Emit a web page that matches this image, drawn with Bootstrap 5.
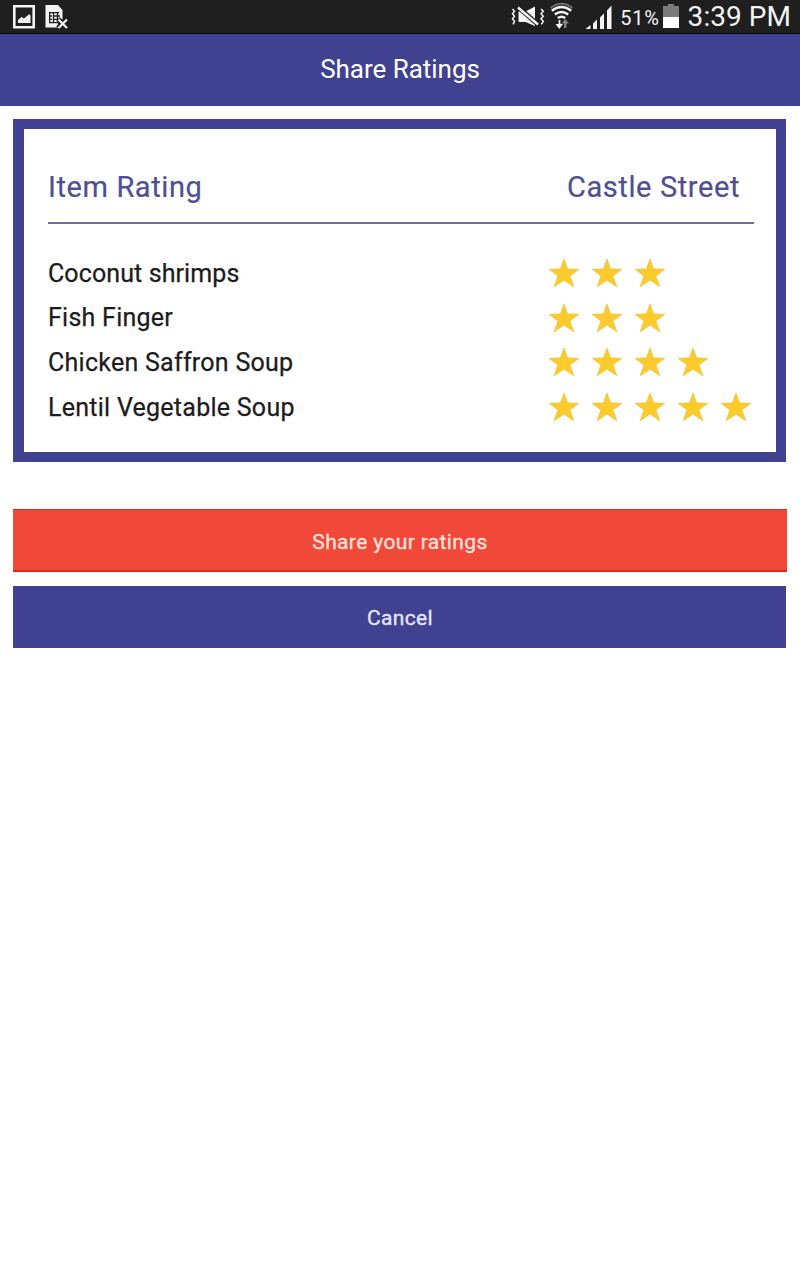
<!DOCTYPE html>
<html lang="en">
<head>
<meta charset="utf-8">
<meta name="viewport" content="width=device-width, initial-scale=1">
<title>Share Ratings</title>
<link href="https://cdn.jsdelivr.net/npm/bootstrap@5.3.0/dist/css/bootstrap.min.css" rel="stylesheet">
<style>
  :root { --indigo: #404291; }
  body { font-family: Roboto, "Liberation Sans", sans-serif; background: #fff; color: #1c1c1e; }
  svg { display: block; flex: none; }
  .status-bar { height: 34px; background: #1f1f1f; border-bottom: 1px solid #050505; color: #f4f4f4; padding: 0 9px 0 12px; }
  .battery-level { font-size: 20px; line-height: 34px; letter-spacing: .75px; padding-top: 1px; }
  .clock { font-size: 28px; line-height: 34px; letter-spacing: .05px; }
  .title-bar { height: 72px; background: var(--indigo); color: #fff; padding-bottom: 2px; }
  .title-bar h1 { font-size: 26px; font-weight: 400; line-height: 30px; letter-spacing: -.03px; }
  .content { padding: 13px 13px 0; }
  .ratings { height: 343px; border: 10px solid var(--indigo); border-left-width: 11px; padding: 0 22px 0 24px; margin-right: 1px; }
  .ratings-head { height: 95px; padding: 42px 14px 0 0; border-bottom: 2px solid #716e9c; color: #4e4f94; font-size: 29px; line-height: 32px; letter-spacing: .6px; -webkit-text-stroke: .2px; }
  .ratings-body { padding-top: 27px; }
  .rating-row { height: 44.7px; font-size: 25px; letter-spacing: .26px; -webkit-text-stroke: .25px; }
  .rating-row:first-child { letter-spacing: .1px; }
  .stars { width: 206px; gap: 11px; margin-top: -1px; }
  .action { height: 63px; border-radius: 0; font-size: 21px; font-weight: 400; padding: 6px 0 0; letter-spacing: .37px; -webkit-text-stroke: .3px; }
  .action-share { background: #f04939; color: #fde3dc; border: 0; border-top: 1px solid #c23429; border-bottom: 2px solid #d9281b; margin-top: 47px; }
  .action-cancel { background: var(--indigo); color: #e8e8f8; border: 0; height: 62px; margin-top: 14px; width: calc(100% - 1px); padding: 3px 0 0 1px; }
</style>
</head>
<body>
<svg width="0" height="0" class="position-absolute" aria-hidden="true">
  <symbol id="star" viewBox="0 0 32 30"><path fill="#fbcb2c" stroke="#e5c545" stroke-width=".6" d="M16 .8 19.600 10.800 31 11.300 22 18 26 29 16 22.200 6 29 9.800 18 1 11.300 12.400 10.800Z"/></symbol>
</svg>

<header class="status-bar d-flex align-items-start justify-content-between">
  <div class="d-flex">
    <svg width="60" height="33" viewBox="12 0 60 33">
      <path fill="none" stroke="#f4f4f4" stroke-width="2.6" d="M14.3 6.3H33.7V27.2H14.3Z"/>
      <path fill="#f4f4f4" d="M18 23V20L21.500 17 24 18.500 29.500 14 30.500 16V23Z"/>
      <path fill="#f4f4f4" d="M45.500 5H58L62.500 10V19L58 23V27.500H45.500Z"/>
      <path fill="none" stroke="#1f1f1f" stroke-width="1.300" d="M49 12.700H59M49 22.700H58M49.700 12.500V23M49 16H52M49 19.300H52M53.500 12.500V23M57.500 12.500V20M53.500 16H60M53.500 19.300H58"/>
      <path stroke="#1f1f1f" stroke-width="5" d="m58 19 9 9m0-9-9 9"/>
      <path stroke="#f4f4f4" stroke-width="2.200" d="m58.500 19.500 8.500 8.500m0-8.500-8.500 8.500"/>
    </svg>
  </div>
  <div class="d-flex align-items-start">
    <svg width="108" height="33" viewBox="508.500 0 108 33">
      <g fill="none" stroke="#f4f4f4" stroke-width="1.500">
        <path d="m513 9 2 2.300-2 2.500 2 2.500-2 2.500 2 2.500-1.500 3M541.500 9l2.300 2.300-2.300 2.500 2.300 2.500-2.300 2.500 2.300 2.500-2 3"/>
      </g>
      <path fill="#f4f4f4" d="M519 11.500H526L535.500 6.500V26L526 22H519Z"/>
      <path stroke="#1f1f1f" stroke-width="4.800" d="m518.500 7 20 17.500"/>
      <path stroke="#f4f4f4" stroke-width="2.400" d="m518.500 7.500 20 17"/>
      <g fill="none" stroke-width="2.400">
        <path stroke="#6c6c6c" stroke-width="1.800" d="M551 8Q562 -.5 573 8"/>
        <path stroke="#f4f4f4" d="M552.300 10.800Q562 3.300 571.700 10.800M555.300 14.500Q562 9.300 568.700 14.500M558.300 18Q562 15.300 565.700 18"/>
        <path stroke="#f4f4f4" stroke-width="1.800" d="M560 20V26"/><path stroke="#858585" d="M565.700 28V21"/>
      </g>
      <path fill="#f4f4f4" d="M556 24H563.500L559.800 29Z"/><path fill="#858585" d="M562 23.500 565.700 19 569.500 23.500Z"/>
      <path fill="#f4f4f4" d="M586 29 591 25V29ZM593.500 23.500 597.500 19.500V29H593.500ZM600.500 17.500 604.500 13.500V29H600.500ZM607.500 10.500 612 5.500V29H607.500Z"/>
    </svg>
    <span class="battery-level ms-1">51%</span>
    <svg width="24" height="33" viewBox="660 0 24 33"><path fill="#7b7b7b" d="M663 6H668V4H674V6H679V17H663Z"/><path fill="#fff" d="M663 17H679V28H663Z"/></svg>
    <span class="clock ms-1">3:39 PM</span>
  </div>
</header>

<div class="title-bar d-flex align-items-center justify-content-center"><h1 class="m-0">Share Ratings</h1></div>

<main class="content">
  <section class="ratings">
    <div class="ratings-head d-flex justify-content-between"><span>Item Rating</span><span>Castle Street</span></div>
    <div class="ratings-body">
      <div class="rating-row d-flex align-items-center justify-content-between"><span>Coconut shrimps</span><div class="stars d-flex"><svg width="32" height="30"><use href="#star"/></svg><svg width="32" height="30"><use href="#star"/></svg><svg width="32" height="30"><use href="#star"/></svg></div></div>
      <div class="rating-row d-flex align-items-center justify-content-between"><span>Fish Finger</span><div class="stars d-flex"><svg width="32" height="30"><use href="#star"/></svg><svg width="32" height="30"><use href="#star"/></svg><svg width="32" height="30"><use href="#star"/></svg></div></div>
      <div class="rating-row d-flex align-items-center justify-content-between"><span>Chicken Saffron Soup</span><div class="stars d-flex"><svg width="32" height="30"><use href="#star"/></svg><svg width="32" height="30"><use href="#star"/></svg><svg width="32" height="30"><use href="#star"/></svg><svg width="32" height="30"><use href="#star"/></svg></div></div>
      <div class="rating-row d-flex align-items-center justify-content-between"><span>Lentil Vegetable Soup</span><div class="stars d-flex"><svg width="32" height="30"><use href="#star"/></svg><svg width="32" height="30"><use href="#star"/></svg><svg width="32" height="30"><use href="#star"/></svg><svg width="32" height="30"><use href="#star"/></svg><svg width="32" height="30"><use href="#star"/></svg></div></div>
    </div>
  </section>
  <button type="button" class="btn action action-share d-block w-100">Share your ratings</button>
  <button type="button" class="btn action action-cancel d-block">Cancel</button>
</main>
<script src="https://cdn.jsdelivr.net/npm/bootstrap@5.3.0/dist/js/bootstrap.bundle.min.js"></script>
</body>
</html>
